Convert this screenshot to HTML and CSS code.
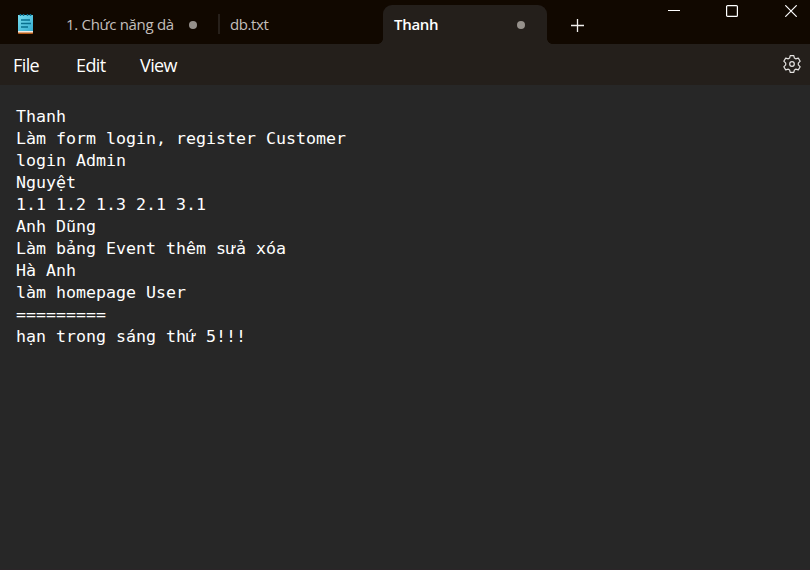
FILE: index.html
```html
<!DOCTYPE html>
<html lang="vi">
<head>
<meta charset="utf-8">
<title>Notepad</title>
<link rel="stylesheet" href="styles.css">
</head>
<body>
<div class="window">
  <header class="titlebar">
    <svg class="logo" width="16" height="21" viewBox="0 0 16 21">
      <defs><linearGradient id="paper" x1="0" y1="0" x2="1" y2="1"><stop offset="0" stop-color="#77dcee"/><stop offset="1" stop-color="#36add0"/></linearGradient></defs>
      <path fill="#b65b17" d="M0 18h15v1.500l-.5.5H.5L0 19.500z"/>
      <path fill="#f5e9df" d="M0 17h15v1.500H0z"/>
      <path fill="url(#paper)" d="M0 1h15v16H0z"/>
      <path stroke="#087294" stroke-width="1.500" d="M2.500 0v2M5.500 0v2M9.500 0v2M12.500 0v2"/>
      <path stroke="#08708f" stroke-width="1.500" d="M3 6h9M3 9.500h10M3 13h7"/>
    </svg>
    <div class="tab tab-first"><span class="label label-first">1. Chức năng dà</span><i class="dot"></i></div>
    <div class="tab tab-second"><span class="label">db.txt</span></div>
    <div class="tab active"><span class="label">Thanh</span><i class="dot"></i></div>
    <svg class="add" width="13" height="13" viewBox="0 0 13 13"><path stroke="#f1efed" stroke-width="1.300" d="M0 6.500h13M6.500 0v13"/></svg>
    <div class="controls">
      <svg width="12" height="12" viewBox="0 0 12 12"><path fill="#fff" d="M0 5h12v1H0z"/></svg>
      <svg width="12" height="12" viewBox="0 0 12 12"><rect x=".6" y=".6" width="10.800" height="10.800" rx="1" fill="none" stroke="#fff" stroke-width="1.200"/></svg>
      <svg class="close" width="12" height="12" viewBox="0 0 12 12"><path stroke="#fff" stroke-width="1.200" d="M.3.3l11.400 11.400M11.700.3L.3 11.700"/></svg>
    </div>
  </header>
  <nav class="menubar">
    <span class="menu menu-file">File</span><span class="menu menu-edit">Edit</span><span class="menu menu-view">View</span>
    <svg class="gear" width="18" height="18" viewBox="0 0 18 18" fill="none" stroke="#e4e2e0" stroke-width="1.200" stroke-linejoin="round">
      <path d="M7.200.6h3.600l.6 2.500 1.300.75 2.600-.75 1.900 3.100L15.300 8.100v1.800l1.900 1.900-1.900 3.100-2.600-.75-1.300.75-.6 2.500H7.200l-.6-2.500-1.300-.75-2.600.75-1.900-3.100L2.700 9.900V8.100L.8 6.200l1.900-3.100 2.600.75 1.300-.75z"/>
      <circle cx="9" cy="9" r="2.300"/>
    </svg>
  </nav>
  <main class="editor">Thanh
Làm form login, register Customer
login Admin
Nguyệt
1.1 1.2 1.3 2.1 3.1
Anh Dũng
Làm bảng Event thêm sửa xóa
Hà Anh
làm homepage User
=========
hạn trong sáng thứ 5!!!</main>
</div>
</body>
</html>
```
FILE: styles.css
```css
* { box-sizing: border-box; }
body { margin: 0; background: #272727; }
.window {
  display: flex;
  flex-direction: column;
  width: 810px;
  height: 570px;
  overflow: hidden;
  font-family: "Open Sans", "Noto Sans", sans-serif;
  border-bottom: 1px solid #2b2528;
}
svg { display: block; flex: none; }
.titlebar { display: flex; height: 44px; background: #110800; }
.logo { margin: 14px 0 0 18px; }
.tab { display: flex; flex: none; align-items: center; color: #c3bfbc; font-size: 15px; letter-spacing: -0.3px; white-space: nowrap; }
.label { line-height: 20px; margin-top: -1px; }
.label-first { width: 108px; }
.tab-first { width: 172px; margin-left: 14px; padding: 5px 0 0 18px; position: relative; }
.tab-first::after { content: ""; position: absolute; right: 0; top: 14px; width: 2px; height: 20px; background: #27201a; }
.tab-first .dot { margin-left: 15px; }
.tab-second { width: 163px; padding: 5px 0 0 10px; letter-spacing: -0.4px; }
.dot { width: 8px; height: 8px; border-radius: 50%; background: #96918c; }
.active {
  position: relative;
  width: 164px;
  height: 39px;
  margin-top: 5px;
  padding: 0 22px 0 11px;
  justify-content: space-between;
  border-radius: 9px 9px 0 0;
  background: #241f1b;
  color: #fff;
  font-weight: 600;
}
.active::before, .active::after { content: ""; position: absolute; bottom: 0; width: 5px; height: 5px; }
.active::before { left: -5px; background: radial-gradient(circle at 0 0, transparent 4.5px, #241f1b 5px); }
.active::after { right: -5px; background: radial-gradient(circle at 100% 0, transparent 4.5px, #241f1b 5px); }
.add { margin: 19px 0 0 24px; }
.controls { display: flex; gap: 46px; margin: 5px 13px 0 auto; }
.close { margin-left: 1px; }
.menubar { display: flex; align-items: center; height: 41px; padding: 0 9px 0 13px; background: #241f1b; color: #fff; font-size: 18px; }
.menu { line-height: 24px; letter-spacing: -0.6px; }
.menu-file { width: 63px; }
.menu-edit { width: 64px; }
.gear { margin: -1px 0 0 auto; }
.editor {
  flex: 1;
  padding: 21px 16px;
  background: #272727;
  color: #fff;
  font: 16.610px/22px "DejaVu Sans Mono", monospace;
  white-space: pre;
}
```
